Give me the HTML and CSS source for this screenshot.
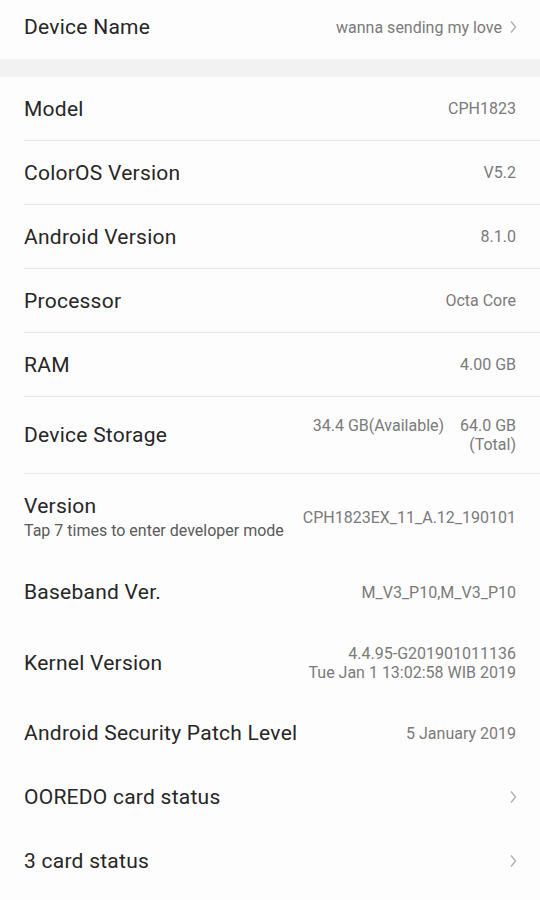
FILE: index.html
```html
<!DOCTYPE html>
<html>
<head>
<meta charset="utf-8">
<link rel="stylesheet" href="styles.css">
</head>
<body>
<div class="page">
  <div class="row row-first">
    <span class="title">Device Name</span>
    <span class="value">wanna sending my love<svg class="chev" viewBox="0 0 8 14" width="8" height="14"><polyline points="2,1.5 6.5,7 2,12.5" fill="none" stroke="#aaa" stroke-width="1.2"/></svg></span>
  </div>
  <div class="band"></div>
  <div class="group">
    <div class="row sep"><span class="title">Model</span><span class="value">CPH1823</span></div>
    <div class="row sep"><span class="title">ColorOS Version</span><span class="value">V5.2</span></div>
    <div class="row sep"><span class="title">Android Version</span><span class="value">8.1.0</span></div>
    <div class="row sep"><span class="title">Processor</span><span class="value">Octa Core</span></div>
    <div class="row sep"><span class="title">RAM</span><span class="value">4.00 GB</span></div>
    <div class="row sep tall"><span class="title">Device Storage</span><span class="value multi"><span class="pre">34.4 GB(Available)    64.0 GB</span><br>(Total)</span></div>
    <div class="row version">
      <div class="titles"><span class="title">Version</span><span class="sub">Tap 7 times to enter developer mode</span></div>
      <span class="value">CPH1823EX_11_A.12_190101</span>
    </div>
    <div class="row"><span class="title">Baseband Ver.</span><span class="value">M_V3_P10,M_V3_P10</span></div>
    <div class="row tall"><span class="title">Kernel Version</span><span class="value multi">4.4.95-G201901011136<br>Tue Jan 1 13:02:58 WIB 2019</span></div>
    <div class="row"><span class="title">Android Security Patch Level</span><span class="value">5 January 2019</span></div>
    <div class="row"><span class="title">OOREDO card status</span><span class="value"><svg class="chev" viewBox="0 0 8 14" width="8" height="14"><polyline points="2,1.5 6.5,7 2,12.5" fill="none" stroke="#aaa" stroke-width="1.2"/></svg></span></div>
    <div class="row"><span class="title">3 card status</span><span class="value"><svg class="chev" viewBox="0 0 8 14" width="8" height="14"><polyline points="2,1.5 6.5,7 2,12.5" fill="none" stroke="#aaa" stroke-width="1.2"/></svg></span></div>
  </div>
</div>
</body>
</html>
```
FILE: styles.css
```css
* { box-sizing: border-box; }
html, body { margin: 0; padding: 0; background: #fdfdfd; }
body { font-family: Roboto, "Noto Sans", "Liberation Sans", sans-serif; }
.page { width: 540px; height: 900px; overflow: hidden; background: #fdfdfd; }
.row {
  display: flex;
  justify-content: space-between;
  align-items: center;
  margin-left: 24px;
  padding-right: 24px;
  height: 64px;
}
.row-first { height: 59px; padding-bottom: 5px; }
.band { height: 18px; background: #f2f2f2; }
.sep { border-bottom: 1px solid #e8e8e8; }
.tall { height: 77px; }
.version { height: 86px; }
.title { font-size: 21px; color: #262626; letter-spacing: 0.25px; }
.value {
  font-size: 16px;
  color: #7a7a7a;
  text-align: right;
  display: flex;
  align-items: center;
}
.value.multi { display: block; line-height: 19px; }
.pre { white-space: pre; }
.chev { margin-left: 7px; margin-right: -1px; }
.titles { display: flex; flex-direction: column; }
.titles .title { line-height: 26px; }
.sub { font-size: 16px; color: #5a5a5a; line-height: 23px; }
```
